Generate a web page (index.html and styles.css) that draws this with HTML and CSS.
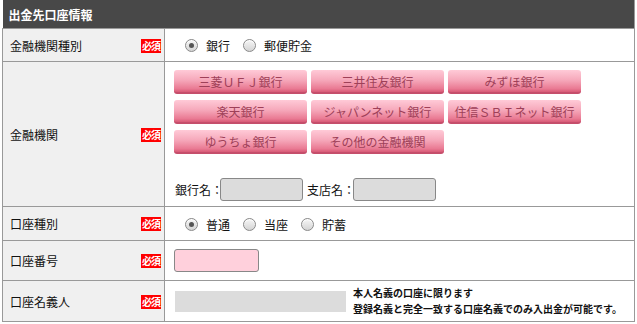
FILE: index.html
```html
<!DOCTYPE html>
<html lang="ja">
<head>
<meta charset="utf-8">
<link rel="stylesheet" href="styles.css">
</head>
<body>
<table class="form">
  <colgroup><col class="c-label"><col class="c-val"></colgroup>
  <tr class="head"><th colspan="2">出金先口座情報</th></tr>
  <tr class="r1">
    <td class="label"><div class="lab"><span>金融機関種別</span><span class="req">必須</span></div></td>
    <td class="val">
      <div class="radios">
        <label class="opt"><span class="radio on"></span>銀行</label>
        <label class="opt"><span class="radio"></span>郵便貯金</label>
      </div>
    </td>
  </tr>
  <tr class="r2">
    <td class="label"><div class="lab"><span>金融機関</span><span class="req">必須</span></div></td>
    <td class="val banks">
      <div class="btns">
        <span class="btn">三菱ＵＦＪ銀行</span>
        <span class="btn">三井住友銀行</span>
        <span class="btn">みずほ銀行</span>
        <span class="btn">楽天銀行</span>
        <span class="btn">ジャパンネット銀行</span>
        <span class="btn">住信ＳＢＩネット銀行</span>
        <span class="btn">ゆうちょ銀行</span>
        <span class="btn">その他の金融機関</span>
      </div>
      <div class="names">
        <span class="nm">銀行名：</span><span class="box gray"></span>
        <span class="nm sp">支店名：</span><span class="box gray"></span>
      </div>
    </td>
  </tr>
  <tr class="r3">
    <td class="label"><div class="lab"><span>口座種別</span><span class="req">必須</span></div></td>
    <td class="val">
      <div class="radios">
        <label class="opt"><span class="radio on"></span>普通</label>
        <label class="opt"><span class="radio"></span>当座</label>
        <label class="opt"><span class="radio"></span>貯蓄</label>
      </div>
    </td>
  </tr>
  <tr class="r4">
    <td class="label"><div class="lab"><span>口座番号</span><span class="req">必須</span></div></td>
    <td class="val"><span class="box pink"></span></td>
  </tr>
  <tr class="r5">
    <td class="label"><div class="lab"><span>口座名義人</span><span class="req">必須</span></div></td>
    <td class="val">
      <div class="holder">
        <span class="flat"></span>
        <div class="note">本人名義の口座に限ります<br>登録名義と完全一致する口座名義でのみ入出金が可能です。</div>
      </div>
    </td>
  </tr>
</table>
</body>
</html>
```

FILE: styles.css
```css
html, body {
  margin: 0;
  padding: 0;
  background: #fff;
}
body {
  font-family: "Noto Sans CJK JP", "Noto Sans", sans-serif;
  font-size: 12px;
  color: #222;
}
.form {
  border-collapse: collapse;
  width: 633px;
  margin-left: 2px;
  table-layout: fixed;
}
.c-label { width: 162px; }
.form td {
  border: 1px solid #999;
  padding: 0;
  vertical-align: middle;
}
.head th {
  height: 28px;
  background: #484848;
  color: #fff;
  font-weight: bold;
  text-align: left;
  padding: 0 0 0 6px;
  font-size: 12px;
  border-right: 1px solid #999;
}
.label {
  background: #f0f0f0;
}
.lab {
  display: flex;
  align-items: center;
  justify-content: space-between;
  padding: 0 3px 0 7px;
  color: #111;
}
.req {
  width: 20px;
  height: 14px;
  background: #f00;
  color: #fff;
  font-size: 10px;
  font-weight: bold;
  line-height: 14px;
  text-align: center;
  letter-spacing: -1px;
  margin-top: 1px;
  overflow: hidden;
  white-space: nowrap;
}
.r1 td { height: 32px; }
.r3 td { height: 33px; }
.r4 td { height: 39px; }
.r5 td { height: 40px; }
.val {
  padding-left: 9px !important;
}
.radios {
  display: flex;
  gap: 13px;
  padding-left: 11px;
  padding-top: 1px;
}
.opt {
  display: flex;
  align-items: center;
  gap: 8px;
  color: #111;
}
.radio {
  width: 11px;
  height: 11px;
  border: 1px solid #8a8a8a;
  border-radius: 50%;
  background: linear-gradient(#f6f6f6, #d4d4d4);
  position: relative;
  box-shadow: inset 0 1px 1px #fff;
}
.radio.on::after {
  content: "";
  position: absolute;
  left: 3px;
  top: 3px;
  width: 5px;
  height: 5px;
  border-radius: 50%;
  background: #555;
}
.banks {
  vertical-align: top !important;
  padding-top: 8px !important;
  padding-bottom: 5px !important;
}
.btns {
  display: grid;
  grid-template-columns: repeat(3, 133px);
  gap: 6px 4px;
}
.btn {
  height: 24px;
  box-sizing: border-box;
  border-radius: 3px;
  background: linear-gradient(#ffcad7, #f6a9bb 45%, #e97a93 85%, #d85a77);
  border-bottom: 2px solid #c54e6b;
  color: #9e4058;
  text-align: center;
  line-height: 23px;
  font-size: 12px;
}
.names {
  display: flex;
  align-items: center;
  margin-top: 24px;
  padding-left: 1px;
  color: #111;
}
.nm {
  width: 45px;
  white-space: nowrap;
}
.sp {
  margin-left: 4px;
  width: 46px;
}
.box {
  display: inline-block;
  width: 83px;
  height: 23px;
  box-sizing: border-box;
  border: 1px solid #888;
  border-radius: 3px;
}
.gray {
  background: #dcdcdc;
}
.pink {
  width: 85px;
  background: #ffd0dc;
  display: block;
}
.holder {
  display: flex;
  align-items: center;
  gap: 7px;
}
.flat {
  width: 171px;
  height: 21px;
  background: #dcdcdc;
  margin-left: 1px;
  flex: none;
}
.note {
  font-size: 10px;
  font-weight: bold;
  line-height: 16px;
  color: #111;
  white-space: nowrap;
}
```
